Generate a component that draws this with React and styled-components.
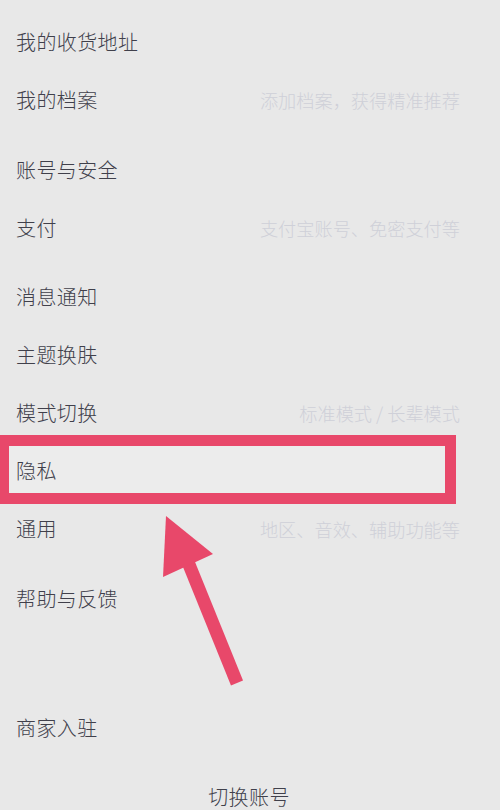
import React from "react";
import styled, { createGlobalStyle } from "styled-components";

const GlobalStyle = createGlobalStyle`
  html, body {
    margin: 0;
    padding: 0;
    background: #e8e8e8;
  }
  body {
    font-family: "Noto Sans CJK SC", "Noto Sans", sans-serif;
  }
`;

const Page = styled.div`
  position: relative;
  width: 500px;
  height: 810px;
  overflow: hidden;
  background: #e8e8e8;
  padding-top: 13px;
  box-sizing: border-box;
`;

const Group = styled.div`
  display: flex;
  flex-direction: column;
  margin-bottom: ${({ gap }) => gap}px;
`;

const Row = styled.div`
  position: relative;
  display: flex;
  align-items: center;
  justify-content: space-between;
  height: 58px;
  padding: 0 40px 0 16px;
`;

const Label = styled.span`
  font-size: 20px;
  font-weight: 300;
  color: #40404b;
  letter-spacing: 0.4px;
  line-height: 1;
  position: relative;
  z-index: 2;
`;

const Hint = styled.span`
  font-size: 18.2px;
  font-weight: 300;
  color: #cfd0d8;
  line-height: 1;
`;

const Highlight = styled.div`
  position: absolute;
  left: 0;
  top: -7px;
  width: 456px;
  height: 69px;
  box-sizing: border-box;
  border: 11px solid #e8486a;
  border-left-width: 9px;
  background: #ececec;
  z-index: 1;
`;

const Footer = styled.div`
  display: flex;
  justify-content: center;
  padding-top: 30px;
  padding-right: 2px;
  font-size: 20px;
  font-weight: 300;
  color: #40404b;
  letter-spacing: 0.4px;
  line-height: 1;
`;

const Overlay = styled.svg`
  position: absolute;
  left: 0;
  top: 0;
  pointer-events: none;
`;

const groups = [
  {
    gap: 12,
    rows: [
      { label: "我的收货地址" },
      { label: "我的档案", hint: "添加档案，获得精准推荐" },
    ],
  },
  {
    gap: 11,
    rows: [
      { label: "账号与安全" },
      { label: "支付", hint: "支付宝账号、免密支付等" },
    ],
  },
  {
    gap: 12,
    rows: [
      { label: "消息通知" },
      { label: "主题换肤" },
      { label: "模式切换", hint: "标准模式 / 长辈模式" },
      { label: "隐私", marked: true },
      { label: "通用", hint: "地区、音效、辅助功能等" },
    ],
  },
  { gap: 71, rows: [{ label: "帮助与反馈" }] },
  { gap: 0, rows: [{ label: "商家入驻" }] },
];

const Arrow = () => (
  <Overlay width="500" height="810" viewBox="0 0 500 810">
    <line x1="188" y1="562" x2="237" y2="683" stroke="#e8486a" strokeWidth="13" />
    <polygon points="166,516 163,577 213,554" fill="#e8486a" />
  </Overlay>
);

export default function App() {
  return (
    <Page>
      <GlobalStyle />
      {groups.map((group, gi) => (
        <Group key={gi} gap={group.gap}>
          {group.rows.map((row) => (
            <Row key={row.label}>
              {row.marked && <Highlight />}
              <Label>{row.label}</Label>
              {row.hint && <Hint>{row.hint}</Hint>}
            </Row>
          ))}
        </Group>
      ))}
      <Footer>切换账号</Footer>
      <Arrow />
    </Page>
  );
}
